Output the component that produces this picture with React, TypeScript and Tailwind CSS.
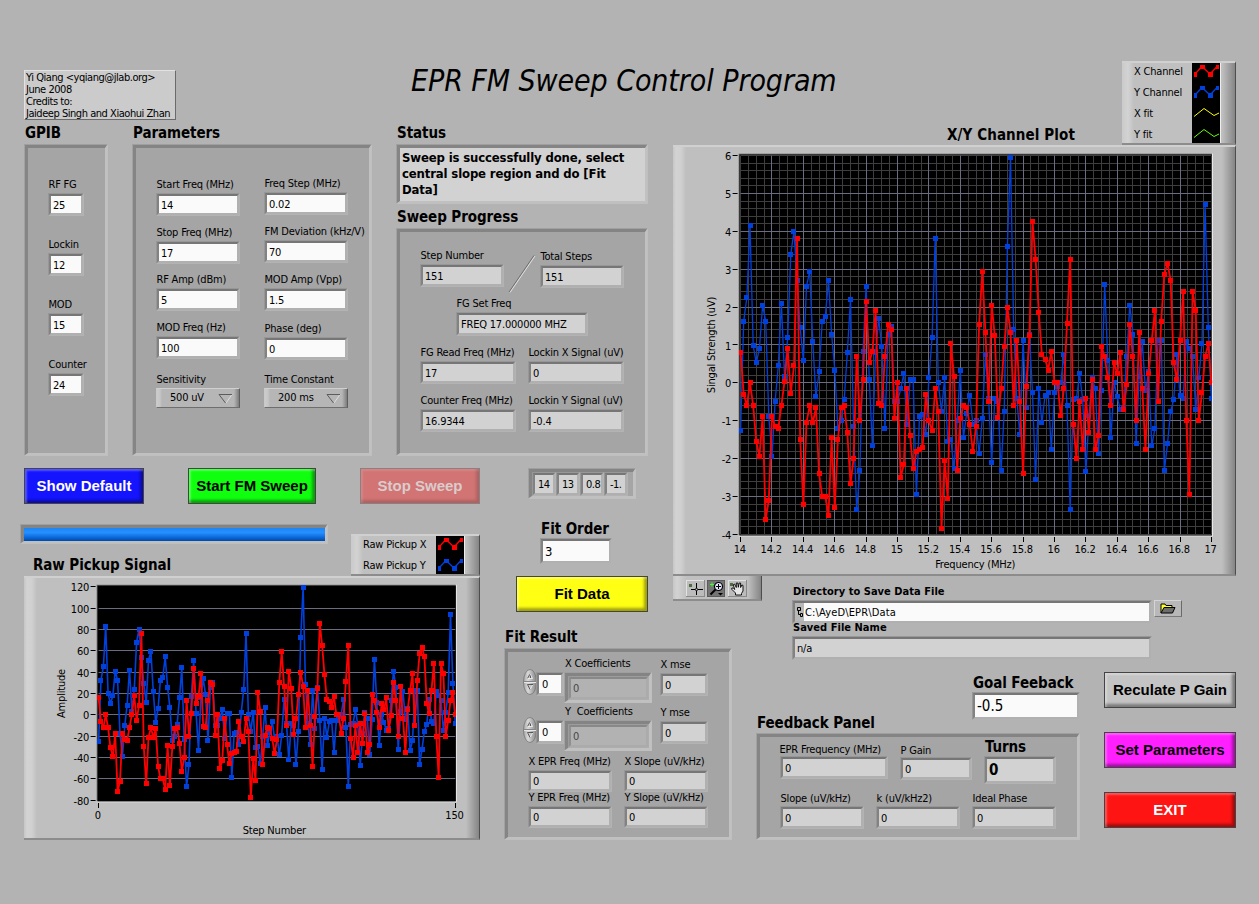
import React from 'react';

const xChannel = [
  0.8, -0.3, -0.6, 0, -0.6, -1.55, -1.95, -0.88, -3.6, -3.1, -0.88, -1.15, -1.2, -0.6, 0.03, 0.9, -0.27, 0.45, 3.82, -1.5,
  -3.22, -1.05, -0.6, -1.05, -0.66, -2.4, -3, -3, -3.5, -1.45, -3.3, -1.5, -0.66, -0.6, -1.32, -2.66, -2, 0.69, -1, 0.08,
  2.15, 0.53, 0.84, 1.92, -0.55, -0.6, 0.69, 1.53, 1.4, -0.95, 0, -2.5, -2.16, -0.16, -1.4, -2.27, -1.82, -1.77, -1.71, -0.3,
  -1, -1.27, -0.16, -0.76, -3.85, -2.06, -3.06, 1.03, 0.18, -2.32, -0.95, -0.6, -0.66, -1.1, -1.82, -1.16, 1.53, 2.95, 1.34, -0.5,
  2.05, 1.24, -0.92, -0.16, 0.95, 2, 1.34, -0.6, 1.13, -0.5, -2.4, -0.1, 1.24, 4.27, 3.27, 1.87, 0.74, 0.63, 0.34, 0.84,
  0, 0, -0.87, -0.16, 1.58, 3.27, -1.1, -2, -0.5, -1.77, -0.42, -1.32, 0.08, -1.77, -1.4, 0.95, 0.69, 0.13, -0.6, 0.53,
  0.24, 0.79, -0.71, -0.05, 1.53, 0.69, -1, 1.34, -0.16, -1.77, 0.24, 1.13, 1.92, -0.5, 1.63, 2.87, 3.16, 2.71, 0.53, 0.08,
  1.13, 2.42, -1, -2.95, 2.42, 1.92, -1, -0.26, 0.69, 1.03, 0,
];

const yChannel = [
  -1.27, 1.63, 2.26, 4.16, 0.98, 0.53, 0.9, 2.05, 1.63, -0.88, -1.95, -0.5, 0.45, 2.1, 0.18, 1.19, 3.4, 4, 2.7, 1.45,
  0.58, 2.55, 2.95, 1.08, -0.37, 0.29, 1.63, 1.76, 2.71, 1.29, 0.34, -1.21, -1, -0.45, 0.79, 2.21, -1.16, -3.35, -2.32, 0.84,
  2.55, 0.08, -1.66, 0.8, 1.69, 0.95, -1.21, 1.29, 1.5, -0.5, -0.5, -0.16, 0.24, -1.1, 0.08, 0.08, -2.95, -0.88, -0.84, -1.37,
  0.13, 1.19, 3.82, 0, -0.76, 0.13, -1.55, -1.5, -2.27, -1, 0.34, -1.45, -0.82, -0.32, -1.1, -1, -1.87, -0.95, 0.74, -0.4,
  -2.11, -0.42, -0.5, -2.32, -0.76, 3.6, 5.95, 1.4, -0.42, -1.37, 1.13, -0.66, 1.29, -0.26, -2.56, -0.16, -1.05, -0.32, -0.26, -1.77,
  -0.26, -0.1, 0, 0.74, -0.6, -3.35, -0.45, -0.42, 0.24, -0.45, -2.35, -0.87, 0.13, -0.16, -1.87, -0.21, 2.6, 0.58, -1.45, 0,
  -0.37, -0.71, -0.66, 0.69, 2.05, 1.29, -1.61, 0.18, 1.08, -0.21, 0.29, -1.66, -1.21, 1.13, 1.13, -2.32, -1.61, -0.76, -0.45, 0.74,
  -0.32, -0.42, 1.08, 0.9, 0.69, -0.71, 0.13, 1.03, 4.7, 1.45, -0.42,
];

const RED = '#ff0000';
const BLUE = '#0040dc';

interface BoxProps {
  className?: string;
  fill?: string;
  children?: React.ReactNode;
}

/* Etched frame around a group of controls */
function Group({ className = '', fill = 'bg-[#a5a5a5]', children }: BoxProps) {
  return (
    <div className={`shrink-0 border border-t-[#9f9f9f] border-l-[#a2a2a2] border-r-[#bfbfbf] border-b-[#bfbfbf] ${className}`}>
      <div className={`h-full w-full border-t-[3px] border-l-[3px] border-r-2 border-b-2 border-t-[#848484] border-l-[#858585] border-r-[#c1c1c1] border-b-[#c0c0c0] ${fill}`}>
        {children}
      </div>
    </div>
  );
}

/* Recessed numeric or string display */
function Sunken({ className = '', fill = 'bg-[#d2d2d2]', children }: BoxProps) {
  return (
    <div className={`shrink-0 border border-t-[#979797] border-l-[#979797] border-r-[#b3b3b3] border-b-[#b3b3b3] ${className}`}>
      <div className={`flex h-full w-full items-center overflow-hidden border-t-2 border-l-2 border-r-2 border-b-2 border-t-[#767676] border-l-[#828282] border-r-[#b0b0b0] border-b-[#b0b0b0] pt-px pl-[2px] leading-none whitespace-nowrap ${fill}`}>
        {children}
      </div>
    </div>
  );
}

interface FieldProps {
  label: string;
  value: string;
  className?: string;
  size?: string;
  labelClass?: string;
  input?: boolean;
}

function Field({ label, value, className = '', size = 'h-[23px] w-[84px]', labelClass = 'h-[18px] leading-[20px]', input }: FieldProps) {
  return (
    <div className={className}>
      <div className={`w-0 pl-[0.5px] whitespace-pre ${labelClass}`}>{label}</div>
      <Sunken className={size} fill={input ? 'bg-[#fafafa]' : 'bg-[#d2d2d2]'}>
        {value}
      </Sunken>
    </div>
  );
}

function Select({ label, value, className = '' }: { label: string; value: string; className?: string }) {
  return (
    <div className={className}>
      <div className="h-[18px] pl-[0.5px] leading-[20px] whitespace-nowrap">{label}</div>
      <div className="flex h-[20px] w-[84px] items-center justify-between border border-t-[#d0d0d0] border-l-[#c9c9c9] border-r-[#5e5e5e] border-b-[#6e6e6e] bg-[linear-gradient(90deg,#cccccc_0,#c6c6c6_3px,#b6b6b6_5px,#b6b6b6_calc(100%-5px),#7c7c7c_100%)] pr-[6px] pl-[13px]">
        <span>{value}</span>
        <svg width="15" height="11" viewBox="0 0 15 11" fill="none">
          <path d="M14 1.5 L8 10" stroke="#dedede" />
          <path d="M14 1.5 H1 L7.5 10" stroke="#5c5c5c" />
        </svg>
      </div>
    </div>
  );
}

function PushButton({ className = '', children }: { className?: string; children: React.ReactNode }) {
  return (
    <button
      className={`flex h-[36px] shrink-0 items-center justify-center border border-[#444444] font-[Liberation_Sans,Arial,sans-serif] text-[15px] font-bold tracking-normal whitespace-nowrap shadow-[inset_2px_2px_2px_rgba(255,255,255,0.28),inset_-3px_-3px_3px_rgba(0,0,0,0.38)] ${className}`}
    >
      {children}
    </button>
  );
}

interface LegendProps {
  items: { label: string; color: string; markers: boolean }[];
  className?: string;
}

function Legend({ items, className = '' }: LegendProps) {
  return (
    <div className={`flex shrink-0 border-t-2 border-r border-b-2 border-t-[#d0d0d0] border-r-[#4d4d4d] border-b-[#8c8c8c] bg-[linear-gradient(90deg,#cacaca_0,#d3d3d3_6px,#c0c0c0_12px,#c0c0c0_calc(100%-13px),#858585_100%)] pl-[12px] ${className}`}>
      <div className="flex-1">
        {items.map((it) => (
          <div key={it.label} className="h-[21px] leading-[17px] whitespace-nowrap">{it.label}</div>
        ))}
      </div>
      <div className="mr-[14px] border-r border-[#eeeeee] bg-black">
        {items.map((it) => (
          <svg key={it.label} width="28" height="20" viewBox="0 0 28 20" fill="none" className="block h-[20px] [&:not(:last-child)]:mb-[1px]">
            {it.markers ? (
              <>
                <path d="M3 11 L10 3.5 L18 11 L25 3.5" stroke={it.color} strokeWidth="1.3" />
                <g fill={it.color}>
                  <rect x="2" y="9" width="3" height="5" />
                  <rect x="8" y="2" width="5" height="4" />
                  <rect x="16" y="9" width="5" height="5" />
                  <rect x="24" y="2" width="3" height="4" />
                </g>
              </>
            ) : (
              <path d="M2 11.5 L12 3.5 L22 10.5 L27 8" stroke={it.color} />
            )}
          </svg>
        ))}
      </div>
    </div>
  );
}

interface PlotProps {
  width: number;
  height: number;
  left: number;
  top: number;
  right: number;
  bottom: number;
  yMin: number;
  yMax: number;
  yStep: number;
  yMinor?: number;
  xLabels: string[];
  xMinor?: number;
  verticalGrid?: boolean;
  scale: number;
  xTitle: string;
  yTitle: string;
  yTitleX: number;
  xTitleX: number;
  xTitleY: number;
  blueWidth: number;
}

function Plot(p: PlotProps) {
  const px = (i: number) => p.left + ((p.right - p.left) * i) / 150;
  const py = (v: number) => p.top + ((p.yMax - v) / (p.yMax - p.yMin)) * (p.bottom - p.top);
  const snap = (n: number) => Math.floor(n) + 0.5;

  const yTicks: number[] = [];
  for (let v = p.yMin; v <= p.yMax; v += p.yStep) yTicks.push(v);

  const yMinor: number[] = [];
  if (p.yMinor) {
    const n = Math.round((p.yMax - p.yMin) / p.yMinor);
    for (let k = 0; k <= n; k++) yMinor.push(p.yMin + k * p.yMinor);
  }
  const xMinor: number[] = [];
  if (p.xMinor) for (let i = 0; i <= 150; i += p.xMinor) xMinor.push(i);

  const xTicks = p.xLabels.map((label, k) => ({ label, i: (k * 150) / (p.xLabels.length - 1) }));

  const series = [
    { data: yChannel, color: BLUE, w: p.blueWidth },
    { data: xChannel, color: RED, w: 1.8 },
  ];

  return (
    <svg width={p.width} height={p.height} viewBox={`0 0 ${p.width} ${p.height}`} className="block" fontSize="11">
      <rect x={p.left - 2} y={p.top - 2} width={p.right - p.left + 3.5} height={p.bottom - p.top + 4} fill="#eeeeee" />
      <rect x={p.left - 2} y={p.top - 2} width={p.right - p.left + 2.5} height={p.bottom - p.top + 3} fill="#5a5a5a" />
      <rect x={p.left - 1} y={p.top - 1} width={p.right - p.left + 1.5} height={p.bottom - p.top + 2} fill="#000000" />

      <g stroke="#3e3e3e">
        {yMinor.map((v) => (
          <path key={v} d={`M${p.left} ${snap(py(v))} H${p.right}`} />
        ))}
        {xMinor.map((i) => (
          <path key={i} d={`M${snap(px(i))} ${p.top} V${p.bottom}`} />
        ))}
      </g>
      <g stroke="#6c6c80">
        {yTicks.slice(1, -1).map((v) => (
          <path key={v} d={`M${p.left} ${snap(py(v))} H${p.right}`} />
        ))}
        {p.verticalGrid &&
          xTicks.slice(1, -1).map((t) => <path key={t.i} d={`M${snap(px(t.i))} ${p.top} V${p.bottom}`} />)}
      </g>

      {series.map((s) => (
        <g key={s.color}>
          <polyline
            fill="none"
            stroke={s.color}
            strokeWidth={s.w}
            points={s.data.map((v, i) => `${px(i).toFixed(1)},${py(v * p.scale).toFixed(1)}`).join(' ')}
          />
          <g fill={s.color}>
            {s.data.map((v, i) => {
              const x0 = Math.max(Math.round(px(i) - 2.5), Math.floor(p.left - 1));
              const x1 = Math.min(Math.round(px(i) - 2.5) + 5, Math.ceil(p.right));
              return <rect key={i} x={x0} y={Math.round(py(v * p.scale) - 2.5)} width={x1 - x0} height="5" />;
            })}
          </g>
        </g>
      ))}

      <g stroke="#000000">
        {yTicks.map((v) => (
          <path key={v} d={`M${p.left - 8} ${snap(py(v))} h5`} />
        ))}
        {xTicks.map((t) => (
          <path key={t.i} d={`M${snap(px(t.i))} ${Math.round(p.bottom) + 3} v5`} />
        ))}
      </g>
      <g textAnchor="end">
        {yTicks.map((v) => (
          <text key={v} x={p.left - 9.5} y={py(v) + 4.5}>{v}</text>
        ))}
      </g>
      <g textAnchor="middle">
        {xTicks.map((t) => (
          <text key={t.i} x={px(t.i) - 0.8} y={p.bottom + 19}>{t.label}</text>
        ))}
        <text x={p.xTitleX} y={p.xTitleY}>{p.xTitle}</text>
        <text transform={`translate(${p.yTitleX} ${(p.top + p.bottom) / 2}) rotate(-90)`}>{p.yTitle}</text>
      </g>
    </svg>
  );
}

const plotFrame =
  'shrink-0 border-t-2 border-r border-b-2 border-t-[#d0d0d0] border-r-[#4d4d4d] border-b-[#8c8c8c] bg-[linear-gradient(90deg,#c6c6c6_0,#d3d3d3_3px,#d0d0d0_8px,#bfbfbf_13px,#bfbfbf_calc(100%-13px),#858585_100%)]';

function Spinner() {
  return (
    <svg width="14" height="26" viewBox="0 0 14 26" className="shrink-0">
      <defs>
        <linearGradient id="knob">
          <stop offset="0" stopColor="#a8a8a8" />
          <stop offset="0.35" stopColor="#d8d8d8" />
          <stop offset="1" stopColor="#858585" />
        </linearGradient>
      </defs>
      <ellipse cx="7" cy="13" rx="6.5" ry="12.5" fill="url(#knob)" stroke="#6f6f6f" strokeWidth="0.7" />
      <path d="M1 12.5 H13" stroke="#858585" />
      <path d="M1 13.5 H13" stroke="#e6e6e6" />
      <path d="M4.5 9.5 L7 5" fill="none" stroke="#4c4c4c" strokeWidth="0.9" />
      <path d="M7 5 L9.5 9.5 H4.5" fill="none" stroke="#eeeeee" strokeWidth="0.9" />
      <path d="M7.5 6.5 V9" fill="none" stroke="#4c4c4c" strokeWidth="0.9" />
      <path d="M9.5 16 L7 20.5" fill="none" stroke="#eeeeee" strokeWidth="0.9" />
      <path d="M10 15.5 H4.5 L7 20.5" fill="none" stroke="#4c4c4c" strokeWidth="0.9" />
    </svg>
  );
}

function Coefficients({ axis, label }: { axis: string; label: string }) {
  return (
    <div className="flex h-[48px] items-start">
      <div className="mt-[15px]"><Spinner /></div>
      <Sunken className="mt-[18px] -ml-px h-[24px] w-[28px]" fill="bg-[#fafafa]"><span className="pl-px">0</span></Sunken>
      <div>
        <div className="h-[18px] pl-px leading-[20px] whitespace-pre">{label}</div>
        <Group className="h-[31px] w-[88px]">
          <Sunken className="h-full w-full opacity-60" fill="bg-[#bcbcbc]">0</Sunken>
        </Group>
      </div>
      <Field className="mt-px ml-[8px]" label={`${axis} mse`} value="0" size="h-[23px] w-[48px]" />
    </div>
  );
}

function GraphPalette() {
  return (
    <div className="flex h-[25px] w-[89px] shrink-0 items-center gap-[6px] border-r border-b-2 border-r-[#4d4d4d] border-b-[#8c8c8c] bg-[linear-gradient(90deg,#c6c6c6_0,#d3d3d3_4px,#c0c0c0_13px,#c0c0c0_calc(100%-13px),#858585_100%)] pt-[2px] pl-[13px]">
      <svg width="19" height="17" viewBox="0 0 19 17">
        <rect width="19" height="17" fill="#8a8a8a" />
        <rect width="18" height="16" fill="#e2e2e2" />
        <rect x="1" y="1" width="17" height="15" fill="#bcbcbc" />
        <rect x="3" y="4" width="3" height="3" fill="#4c6b3f" />
        <path d="M5 9.5 H17 M10.5 3 V15" stroke="#000000" />
        <circle cx="10.5" cy="9.5" r="1.2" fill="#bcbcbc" stroke="#000000" strokeWidth="0.8" />
      </svg>
      <svg width="18" height="17" viewBox="0 0 18 17" className="-ml-[4px]">
        <rect width="18" height="17" fill="#5b5b5b" />
        <rect x="1" y="1" width="16" height="15" fill="#747474" />
        <path d="M3 4.5 H7 M5 2.5 V6.5" stroke="#42ff2a" />
        <circle cx="11.5" cy="6.5" r="4" fill="#e6e6ff" stroke="#000000" strokeWidth="1.2" />
        <path d="M9 6.5 H14 M11.5 4 V9" stroke="#000000" />
        <path d="M8.5 9.5 L3.5 14.5" stroke="#000000" strokeWidth="2" />
        <path d="M11 13 H16 L13.5 15.5 Z" fill="#000000" />
      </svg>
      <svg width="19" height="17" viewBox="0 0 19 17" className="-ml-[3px]">
        <rect width="19" height="17" fill="#8a8a8a" />
        <rect width="18" height="16" fill="#e2e2e2" />
        <rect x="1" y="1" width="17" height="15" fill="#bcbcbc" />
        <rect x="2" y="3" width="3" height="3" fill="#4c6b3f" />
        <path
          d="M7.5 15 V13 L3.8 9.3 V8 H5.2 L6.8 9.5 L5.2 4.8 L6.5 4 L8.3 7.5 V3 H9.8 L10.3 7.3 L11.2 3 H12.6 V7.5 L13.8 5 L15 5.4 V11 L13.5 13.5 V15 Z"
          fill="#e6e6e6"
          stroke="#000000"
          strokeWidth="0.9"
        />
      </svg>
    </div>
  );
}

const heading = 'text-[15px] font-bold tracking-[-0.08px] whitespace-nowrap pl-px';

export default function App() {
  return (
    <div className="flex h-[904px] w-[1259px] overflow-hidden bg-[#b3b3b3] font-[DejaVu_Sans_Condensed,Tahoma,sans-serif] text-[11px] tracking-[-0.2px] text-black">
      {/* Left and centre of the panel */}
      <div className="w-[673px] shrink-0">
        <header className="flex h-[124px] items-start pl-[24px]">
          <div className="mt-[70px] h-[50px] w-[152px] shrink-0 border border-t-[#e2e2e2] border-l-[#e2e2e2] border-r-[#6a6a6a] border-b-[#6a6a6a] bg-[#cbcbcb] pl-px leading-[12px] tracking-[-0.46px] whitespace-nowrap">
            <div className="pt-px">Yi Qiang &lt;yqiang@jlab.org&gt;</div>
            <div>June 2008</div>
            <div>Credits to:</div>
            <div>Jaideep Singh and Xiaohui Zhan</div>
          </div>
          <h1 className="mt-[63px] ml-[235px] text-[30px] leading-[36px] tracking-[-0.08px] whitespace-nowrap italic">EPR FM Sweep Control Program</h1>
        </header>

        <div className="flex pl-[24px]">
          <section>
            <h2 className={`h-[20px] leading-[19px] ${heading}`}>GPIB</h2>
            <Group className="h-[312px] w-[84px]">
              <div className="flex flex-col gap-[19px] pt-[27px] pl-[20px]">
                <Field input label="RF FG" value="25" size="h-[23px] w-[36px]" />
                <Field input label="Lockin" value="12" size="h-[23px] w-[36px]" />
                <Field input label="MOD" value="15" size="h-[23px] w-[36px]" />
                <Field input label="Counter" value="24" size="h-[23px] w-[36px]" />
              </div>
            </Group>
          </section>

          <section className="ml-[24px]">
            <h2 className={`h-[20px] leading-[19px] ${heading}`}>Parameters</h2>
            <Group className="h-[312px] w-[240px]">
              <div className="flex gap-[24px] pl-[20px]">
                <div className="pt-[27px]">
                  <Field input label="Start Freq (MHz)" value="14" />
                  <Field input className="mt-[7px]" label="Stop Freq (MHz)" value="17" />
                  <Field input className="mt-[6px]" label="RF Amp (dBm)" value="5" />
                  <Field input className="mt-[7px]" label="MOD Freq (Hz)" value="100" />
                  <Select className="mt-[11px]" label="Sensitivity" value="500 uV" />
                </div>
                <div className="pt-[26px]">
                  <Field input label="Freq Step (MHz)" value="0.02" />
                  <Field input className="mt-[7px]" label="FM Deviation (kHz/V)" value="70" />
                  <Field input className="mt-[7px]" label="MOD Amp (Vpp)" value="1.5" />
                  <Field input className="mt-[8px]" label="Phase (deg)" value="0" />
                  <Select className="mt-[10px]" label="Time Constant" value="200 ms" />
                </div>
              </div>
            </Group>
          </section>

          <section className="ml-[24px]">
            <h2 className={`h-[20px] leading-[19px] ${heading}`}>Status</h2>
            <Group className="h-[60px] w-[252px]" fill="bg-[#d2d2d2]">
              <p className="pt-[2px] pl-[2px] text-[13px] leading-[16px] font-bold tracking-[-0.15px] whitespace-nowrap">
                Sweep is successfully done, select
                <br />
                central slope region and do [Fit
                <br />
                Data]
              </p>
            </Group>
            <h2 className={`h-[24px] leading-[27px] ${heading}`}>Sweep Progress</h2>
            <Group className="h-[228px] w-[252px]">
              <div className="pt-[14px] pl-[20px]">
                <div className="flex h-[42px]">
                  <Field label="Step Number" value="151" />
                  <svg width="36" height="48" viewBox="0 0 36 48" className="shrink-0">
                    <path d="M5 46 L30 9.5" stroke="#6e6e6e" />
                    <path d="M6 46.5 L31 10" stroke="#e0e0e0" />
                  </svg>
                  <Field className="mt-px" label="Total Steps" value="151" />
                </div>
                <Field className="mt-[6px] ml-[36px]" label="FG Set Freq" value="FREQ 17.000000 MHZ" size="h-[24px] w-[132px]" />
                <div className="mt-[7px] flex gap-[12px]">
                  <Field label="FG Read Freq (MHz)" value="17" size="h-[23px] w-[96px]" />
                  <Field label="Lockin X Signal (uV)" value="0" size="h-[23px] w-[96px]" />
                </div>
                <div className="mt-[7px] flex gap-[12px]">
                  <Field label="Counter Freq (MHz)" value="16.9344" size="h-[23px] w-[96px]" />
                  <Field label="Lockin Y Signal (uV)" value="-0.4" size="h-[23px] w-[96px]" />
                </div>
              </div>
            </Group>
          </section>
        </div>

        <div className="mt-[12px] flex h-[36px] items-start pl-[24px]">
          <PushButton className="w-[120px] bg-[#1414ff] text-white">Show Default</PushButton>
          <PushButton className="ml-[44px] w-[128px] bg-[#0fff0f] text-black">Start FM Sweep</PushButton>
          <PushButton className="ml-[44px] w-[120px] !border-[#8a8080] bg-[#d27474] text-[#d9cccc] !shadow-[inset_2px_2px_2px_rgba(255,255,255,0.12),inset_-3px_-3px_3px_rgba(0,0,0,0.16)]">
            Stop Sweep
          </PushButton>
          <Group className="ml-[48px] h-[31px] w-[108px]">
            <div className="flex h-full">
              {['14', '13', '0.8', '-1.'].map((v) => (
                <Sunken key={v} className="h-[24px] w-[24px]">
                  <span className="pl-px tracking-[-0.5px]">{v}</span>
                </Sunken>
              ))}
            </div>
          </Group>
        </div>

        <div className="flex">
          <div className="w-[504px] shrink-0">
            <Group className="mt-[20px] ml-[20px] h-[20px] w-[308px]">
              <div className="h-full w-full bg-[linear-gradient(180deg,#1c86f4_0,#2590ff_35%,#1070e4_65%,#0048a8_100%)]" />
            </Group>
            <div className="-mt-[10px] flex h-[42px] w-[480px] justify-between pl-[32px]">
              <h2 className={`mt-[20px] leading-[23px] ${heading}`}>Raw Pickup Signal</h2>
              <Legend
                className="w-[129px]"
                items={[
                  { label: 'Raw Pickup X', color: RED, markers: true },
                  { label: 'Raw Pickup Y', color: BLUE, markers: true },
                ]}
              />
            </div>
            <div className={`ml-[24px] h-[264px] w-[456px] ${plotFrame}`}>
              <Plot
                width={455}
                height={260}
                left={74.6}
                top={8.7}
                right={431.3}
                bottom={222.3}
                yMin={-80}
                yMax={120}
                yStep={20}
                xLabels={['0', '150']}
                scale={20}
                xTitle="Step Number"
                yTitle="Amplitude"
                yTitleX={41}
                xTitleX={250.3}
                xTitleY={256}
                blueWidth={1.6}
              />
            </div>
          </div>

          <div className="shrink-0">
            <h2 className={`mt-[15px] ml-[36px] h-[19px] leading-[21px] ${heading}`}>Fit Order</h2>
            <Sunken className="ml-[36px] h-[26px] w-[72px] text-[13px]" fill="bg-[#fafafa]">3</Sunken>
            <PushButton className="mt-[12px] ml-[12px] w-[132px] bg-[#ffff14] text-black">Fit Data</PushButton>
            <h2 className={`mt-[14px] h-[22px] leading-[23px] ${heading}`}>Fit Result</h2>
            <Group className="h-[192px] w-[228px]">
              <div className="pt-[2px] pl-[15px]">
                <Coefficients axis="X" label="X Coefficients" />
                <Coefficients axis="Y" label="Y  Coefficients" />
              </div>
              <div className="mt-[2px] flex gap-[12px] pl-[20px]">
                <Field label="X EPR Freq (MHz)" value="0" size="h-[22px] w-[84px]" />
                <Field label="X Slope (uV/kHz)" value="0" size="h-[22px] w-[84px]" />
              </div>
              <div className="-mt-[4px] flex gap-[12px] pl-[20px]">
                <Field label="Y EPR Freq (MHz)" value="0" size="h-[22px] w-[84px]" />
                <Field label="Y Slope (uV/kHz)" value="0" size="h-[22px] w-[84px]" />
              </div>
            </Group>
          </div>
        </div>
      </div>

      {/* Sweep plot, file paths and feedback */}
      <div className="w-[586px] shrink-0 pt-[61px]">
        <div className="flex h-[84px] w-[563px] justify-between pl-[273px]">
          <h2 className={`mt-[63px] leading-[22px] !tracking-[0.1px] ${heading}`}>X/Y Channel Plot</h2>
          <Legend
            className="w-[114px]"
            items={[
              { label: 'X Channel', color: RED, markers: true },
              { label: 'Y Channel', color: BLUE, markers: true },
              { label: 'X fit', color: '#ffff00', markers: false },
              { label: 'Y fit', color: '#66ff00', markers: false },
            ]}
          />
        </div>
        <div className={`h-[431px] w-[563px] ${plotFrame}`}>
          <Plot
            width={562}
            height={427}
            left={67.6}
            top={8.6}
            right={538.4}
            bottom={387.4}
            yMin={-4}
            yMax={6}
            yStep={1}
            yMinor={0.2}
            xLabels={['14', '14.2', '14.4', '14.6', '14.8', '15', '15.2', '15.4', '15.6', '15.8', '16', '16.2', '16.4', '16.6', '16.8', '17']}
            xMinor={2.5}
            verticalGrid
            scale={1}
            xTitle="Frequency (MHz)"
            yTitle="Singal Strength (uV)"
            yTitleX={42}
            xTitleX={302.2}
            xTitleY={421}
            blueWidth={1.3}
          />
        </div>

        <div className="flex h-[84px] items-start">
          <GraphPalette />
          <div className="mt-[6px] ml-[30px] w-[360px]">
            <div className="h-[18px] pl-px leading-[19px] font-bold tracking-[0.03px] whitespace-nowrap">Directory to Save Data File</div>
            <Sunken className="h-[24px] w-full" fill="bg-[#fafafa]">
              <span className="-mt-px -ml-[2px] flex h-[19px] w-[9px] items-center justify-center bg-[#b8b8b8]">
                <svg width="6" height="10" viewBox="0 0 6 10" fill="none" stroke="#000000">
                  <path d="M0.5 0.5 H3.5 V3.5 H0.5 Z M3.5 6.5 H5.5 V9.5 H3.5 Z M1.5 4 V7.5 H3.5" />
                </svg>
              </span>
              <span className="pl-px tracking-[0.15px]">C:\AyeD\EPR\Data</span>
            </Sunken>
            <div className="-mt-[6px] h-[18px] pl-px leading-[19px] font-bold tracking-[0.03px]">Saved File Name</div>
            <Sunken className="h-[24px] w-full">n/a</Sunken>
          </div>
          <button className="mt-[24px] ml-[2px] flex h-[17px] w-[28px] items-center justify-center border border-t-[#d5d5d5] border-l-[#d5d5d5] border-r-[#6a6a6a] border-b-[#7a7a7a] bg-[#b8b8b8]">
            <svg width="16" height="11" viewBox="0 0 16 11">
              <path d="M1 10 V1 H5 L6 2.5 H12 V4.5" fill="#ffff22" stroke="#000000" />
              <path d="M1 10 L4 4.5 H15 L12.5 10 Z" fill="#6d6d6d" stroke="#000000" />
            </svg>
          </button>
        </div>

        <div className="flex items-start">
          <div className="ml-[83px] w-[324px] shrink-0 pt-[14px]">
            <h2 className={`ml-[216px] h-[18px] leading-[19px] ${heading}`}>Goal Feeback</h2>
            <Sunken className="ml-[216px] h-[28px] w-[108px] text-[15px] tracking-normal" fill="bg-[#fafafa]">-0.5</Sunken>
            <h2 className={`-mt-[7px] h-[20px] leading-[21px] ${heading}`}>Feedback Panel</h2>
            <Group className="h-[107px] w-[324px]">
              <div className="flex h-[52px] gap-[12px] pt-[3px] pl-[20px]">
                <Field label="EPR Frequency (MHz)" value="0" size="h-[23px] w-[108px]" labelClass="h-[16px] -ml-px leading-[20px]" />
                <Field className="mt-px" label="P Gain" value="0" size="h-[23px] w-[72px]" labelClass="h-[16px] leading-[20px]" />
                <div className="-mt-[3px]">
                  <div className={`h-[19px] leading-[21px] ${heading}`}>Turns</div>
                  <Sunken className={`h-[28px] w-[72px] ${heading} !pl-0`}>0</Sunken>
                </div>
              </div>
              <div className="mt-px flex gap-[12px] pl-[20px]">
                <Field label="Slope (uV/kHz)" value="0" labelClass="h-[16px] leading-[18px]" />
                <Field label="k (uV/kHz2)" value="0" labelClass="h-[16px] leading-[18px]" />
                <Field label="Ideal Phase" value="0" labelClass="h-[16px] leading-[18px]" />
              </div>
            </Group>
          </div>
          <div className="mt-[12px] ml-[24px] flex flex-col gap-[24px]">
            <PushButton className="w-[132px] bg-[#c4c4c4] text-black">Reculate P Gain</PushButton>
            <PushButton className="w-[132px] bg-[#ff1fff] text-black">Set Parameters</PushButton>
            <PushButton className="w-[132px] bg-[#ff1414] text-white">EXIT</PushButton>
          </div>
        </div>
      </div>
    </div>
  );
}
